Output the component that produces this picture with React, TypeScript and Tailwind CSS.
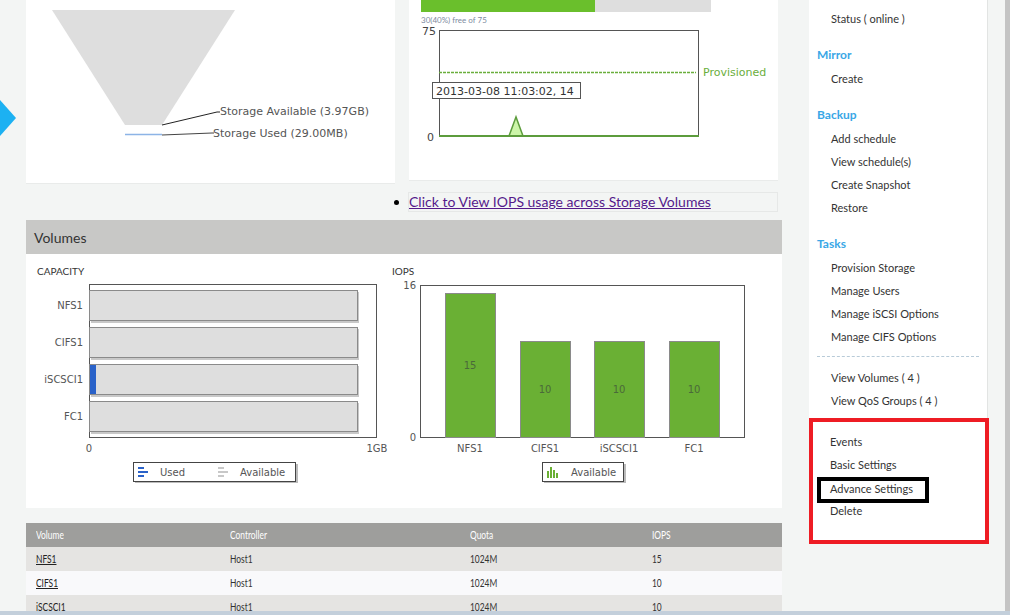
import React from "react";

const chartFont = { fontFamily: '"DejaVu Sans", Verdana, sans-serif' };

const sideGroups: { title?: string; items: string[] }[] = [
	{ items: ["Status ( online )"] },
	{ title: "Mirror", items: ["Create"] },
	{ title: "Backup", items: ["Add schedule", "View schedule(s)", "Create Snapshot", "Restore"] },
	{ title: "Tasks", items: ["Provision Storage", "Manage Users", "Manage iSCSI Options", "Manage CIFS Options"] },
];

const volumes = [
	{ name: "NFS1", controller: "Host1", quota: "1024M", iops: 15, used: 0 },
	{ name: "CIFS1", controller: "Host1", quota: "1024M", iops: 10, used: 0 },
	{ name: "iSCSCI1", controller: "Host1", quota: "1024M", iops: 10, used: 6 },
	{ name: "FC1", controller: "Host1", quota: "1024M", iops: 10, used: 0 },
];

function FunnelCard() {
	return (
		<div className="w-[369px] h-[184px] bg-white border-b border-[#e9ebea]">
			<svg width="369" height="183" style={chartFont}>
				<polygon points="26,10 209,10 136,125 99,125" fill="#dedede" />
				<line x1="99" y1="134.5" x2="136" y2="134.5" stroke="#8db4e6" strokeWidth="1.5" />
				<polyline points="136,125 191,112 194,112" fill="none" stroke="#222" strokeWidth="1" />
				<polyline points="136,135 186,133 188,133" fill="none" stroke="#444" strokeWidth="1" />
				<text x="194" y="115" fontSize="11" fill="#555">Storage Available (3.97GB)</text>
				<text x="187" y="137" fontSize="11" fill="#555">Storage Used (29.00MB)</text>
			</svg>
		</div>
	);
}

function IopsUsageCard() {
	return (
		<div className="w-[369px] h-[181px] bg-white border-b border-[#e9ebea]">
			<svg width="369" height="180" style={chartFont}>
				<rect x="12" y="0" width="174" height="12" fill="#6abf2c" />
				<rect x="186" y="0" width="116" height="12" fill="#dedede" />
				<text x="12" y="23" fontSize="8" fill="#7d8aa0" style={{ fontFamily: "Lato, sans-serif" }}>
					30(40%) free of 75
				</text>
				<text x="27" y="35" fontSize="11" fill="#444" textAnchor="end">75</text>
				<rect x="30.5" y="30.5" width="259" height="106" fill="none" stroke="#555" />
				<line x1="30" y1="72.5" x2="287" y2="72.5" stroke="#6aae3c" strokeWidth="1.5" strokeDasharray="3,1" />
				<text x="294" y="76" fontSize="11" fill="#6aae3c">Provisioned</text>
				<polygon points="100,136 107,117 114,136" fill="#ccf5a8" stroke="#5c9c3c" strokeWidth="1.5" />
				<line x1="30" y1="136" x2="290" y2="136" stroke="#5c9c3c" strokeWidth="2" />
				<text x="25" y="141" fontSize="11" fill="#444" textAnchor="end">0</text>
				<rect x="23.5" y="82.5" width="148" height="16" fill="#fff" stroke="#555" />
				<text x="27" y="94.5" fontSize="11" fill="#333">2013-03-08 11:03:02, 14</text>
			</svg>
		</div>
	);
}

function CapacityChart() {
	return (
		<svg width="360" height="240" style={{ ...chartFont, overflow: "visible" }}>
			<text x="11" y="21" fontSize="10" fill="#333" style={{ fontFamily: "Lato, sans-serif" }}>CAPACITY</text>
			<rect x="63.5" y="30.5" width="287" height="153" fill="none" stroke="#555" />
			{volumes.map((v, i) => {
				const y = 36 + 37 * i;
				return (
					<g key={v.name}>
						<rect x="65" y={y + 2} width="268" height="31" fill="#c8c8c8" />
						<rect x="63.5" y={y + 0.5} width="268" height="30" fill="#dedede" stroke="#8a8a8a" />
						{v.used > 0 && <rect x="64" y={y + 1} width={v.used} height="29" fill="#2a62c9" />}
						<text x="57" y={y + 19} fontSize="10" fill="#555" textAnchor="end">{v.name}</text>
					</g>
				);
			})}
			<text x="63" y="198" fontSize="10" fill="#555" textAnchor="middle">0</text>
			<text x="351" y="198" fontSize="10" fill="#555" textAnchor="middle">1GB</text>
			<rect x="109" y="210" width="163" height="19" fill="#bbb" />
			<rect x="107.5" y="208.5" width="162" height="19" fill="#fff" stroke="#444" />
			<rect x="112" y="213" width="6" height="2" fill="#2a62c9" />
			<rect x="112" y="217" width="10" height="2" fill="#2a62c9" />
			<rect x="112" y="221" width="6" height="2" fill="#2a62c9" />
			<text x="134" y="222" fontSize="10" fill="#555">Used</text>
			<rect x="192" y="213" width="6" height="2" fill="#c8c8c8" />
			<rect x="192" y="217" width="10" height="2" fill="#c8c8c8" />
			<rect x="192" y="221" width="6" height="2" fill="#c8c8c8" />
			<text x="214" y="222" fontSize="10" fill="#555">Available</text>
		</svg>
	);
}

function IopsChart() {
	const xs = [59, 134, 208, 283];
	return (
		<svg width="396" height="240" style={chartFont}>
			<text x="6" y="21" fontSize="10" fill="#333" style={{ fontFamily: "Lato, sans-serif" }}>IOPS</text>
			<text x="30" y="35" fontSize="10" fill="#555" textAnchor="end">16</text>
			<text x="30" y="187" fontSize="10" fill="#555" textAnchor="end">0</text>
			<rect x="34.5" y="31.5" width="324" height="152" fill="none" stroke="#555" />
			{volumes.map((v, i) => {
				const top = v.iops === 15 ? 39 : 87;
				return (
					<g key={v.name}>
						<rect x={xs[i] + 0.5} y={top + 0.5} width="50" height={183 - top} fill="#6ab034" stroke="#8a8a8a" />
						<text x={xs[i] + 25} y={v.iops === 15 ? 115 : 139} fontSize="10" fill="#4a6a3a" textAnchor="middle">
							{v.iops}
						</text>
						<text x={xs[i] + 25} y="198" fontSize="10" fill="#555" textAnchor="middle">{v.name}</text>
					</g>
				);
			})}
			<rect x="158" y="210" width="82" height="19" fill="#bbb" />
			<rect x="156.5" y="208.5" width="81" height="19" fill="#fff" stroke="#444" />
			<rect x="161" y="217" width="2" height="7" fill="#6ab034" />
			<rect x="164" y="213" width="2" height="11" fill="#6ab034" />
			<rect x="167" y="216" width="2" height="8" fill="#6ab034" />
			<rect x="170" y="219" width="2" height="5" fill="#6ab034" />
			<text x="185" y="222" fontSize="10" fill="#555">Available</text>
		</svg>
	);
}

function SideItem({ label }: { label: string }) {
	return <div className="h-[23px] flex items-center pl-[22px] text-[11px] text-[#333]">{label}</div>;
}

// narrow table text: the page font has no condensed cut, so squeeze it
function Narrow({ children, className = "" }: { children: React.ReactNode; className?: string }) {
	return <span className={`inline-block origin-left scale-x-[0.7] whitespace-nowrap ${className}`}>{children}</span>;
}

export default function App() {
	return (
		<div
			className="w-[1010px] h-[615px] overflow-hidden bg-[#f3f5f4] flex flex-col"
			style={{ fontFamily: "Lato, sans-serif" }}
		>
			<div className="flex h-[611px]">
				{/* gutter with arrow */}
				<div className="w-[26px] pt-[100px]">
					<div className="w-0 h-0 border-y-[18px] border-y-transparent border-l-[16px] border-l-[#1cb1f2]" />
				</div>

				{/* main column */}
				<div className="w-[756px] flex flex-col">
					<div className="flex gap-[14px]">
						<FunnelCard />
						<IopsUsageCard />
					</div>

					<div className="flex items-center mt-[8px] ml-[368px]">
						<span className="w-[5px] h-[5px] rounded-full bg-black mr-[9px]" />
						<div className="w-[370px] h-[20px] border border-[#e6e8e7] flex items-center">
							<a href="#" className="text-[14px] text-[#551a8b] underline leading-none">
								Click to View IOPS usage across Storage Volumes
							</a>
						</div>
					</div>

					{/* volumes panel */}
					<div className="mt-[8px] bg-white">
						<div className="h-[34px] bg-[#c8c8c6] flex items-center pl-[8px] text-[14px] text-[#333]">
							Volumes
						</div>
						<div className="h-[254px] flex">
							<CapacityChart />
							<IopsChart />
						</div>
					</div>

					{/* volume table */}
					<div className="mt-[15px] text-[12px]">
						<div className="h-[24px] bg-[#9e9e9c] text-white grid grid-cols-[194px_240px_182px_1fr] items-center pl-[10px]">
							<Narrow>Volume</Narrow>
							<Narrow>Controller</Narrow>
							<Narrow>Quota</Narrow>
							<Narrow>IOPS</Narrow>
						</div>
						{volumes.map((v, i) => (
							<div
								key={v.name}
								className={`h-[24px] grid grid-cols-[194px_240px_182px_1fr] items-center pl-[10px] text-[#333] ${
									i % 2 === 0 ? "bg-[#e5e4e2]" : "bg-[#f9f9fb]"
								}`}
							>
								<a href="#" className="text-[#222]">
									<Narrow className={i < 2 ? "underline" : ""}>{v.name}</Narrow>
								</a>
								<Narrow>{v.controller}</Narrow>
								<Narrow>{v.quota}</Narrow>
								<Narrow>{v.iops}</Narrow>
							</div>
						))}
					</div>
				</div>

				{/* sidebar */}
				<div className="ml-[27px] w-[180px] flex flex-col">
					<div className="w-[179px] bg-white border-r border-[#e2e4e3] pt-[8px] pb-[5px]">
						{sideGroups.map((g, gi) => (
							<div key={gi} className={gi > 0 ? "mt-[13px]" : ""}>
								{g.title && (
									<div className="h-[24px] flex items-center pl-[8px] pb-[2px] text-[12px] font-bold text-[#3aa7e6]">
										{g.title}
									</div>
								)}
								{g.items.map((it) => (
									<SideItem key={it} label={it} />
								))}
							</div>
						))}
						<div className="mx-[8px] mt-[7px] mb-[10px] border-t border-dashed border-[#b8cbd8]" />
						<SideItem label="View Volumes ( 4 )" />
						<SideItem label="View QoS Groups ( 4 )" />
					</div>
					<div className="h-[126px] bg-white border-4 border-[#ee1c24] pt-[8.5px]">
						<div className="h-[23px] flex items-center pl-[17px] text-[11px] text-[#333]">Events</div>
						<div className="h-[23px] flex items-center pl-[17px] text-[11px] text-[#333]">Basic Settings</div>
						<div className="ml-[4px] w-[112px] h-[26px] border-4 border-black flex items-center pl-[9px] text-[11px] text-[#333] -mb-[3px]">
							Advance Settings
						</div>
						<div className="h-[23px] flex items-center pl-[17px] text-[11px] text-[#333]">Delete</div>
					</div>
				</div>

				{/* scroll strip */}
				<div className="ml-[16px] w-[5px] bg-[#c4c4c4]" />
			</div>
			<div className="h-[4px] bg-[#c3cfdb]" />
		</div>
	);
}
